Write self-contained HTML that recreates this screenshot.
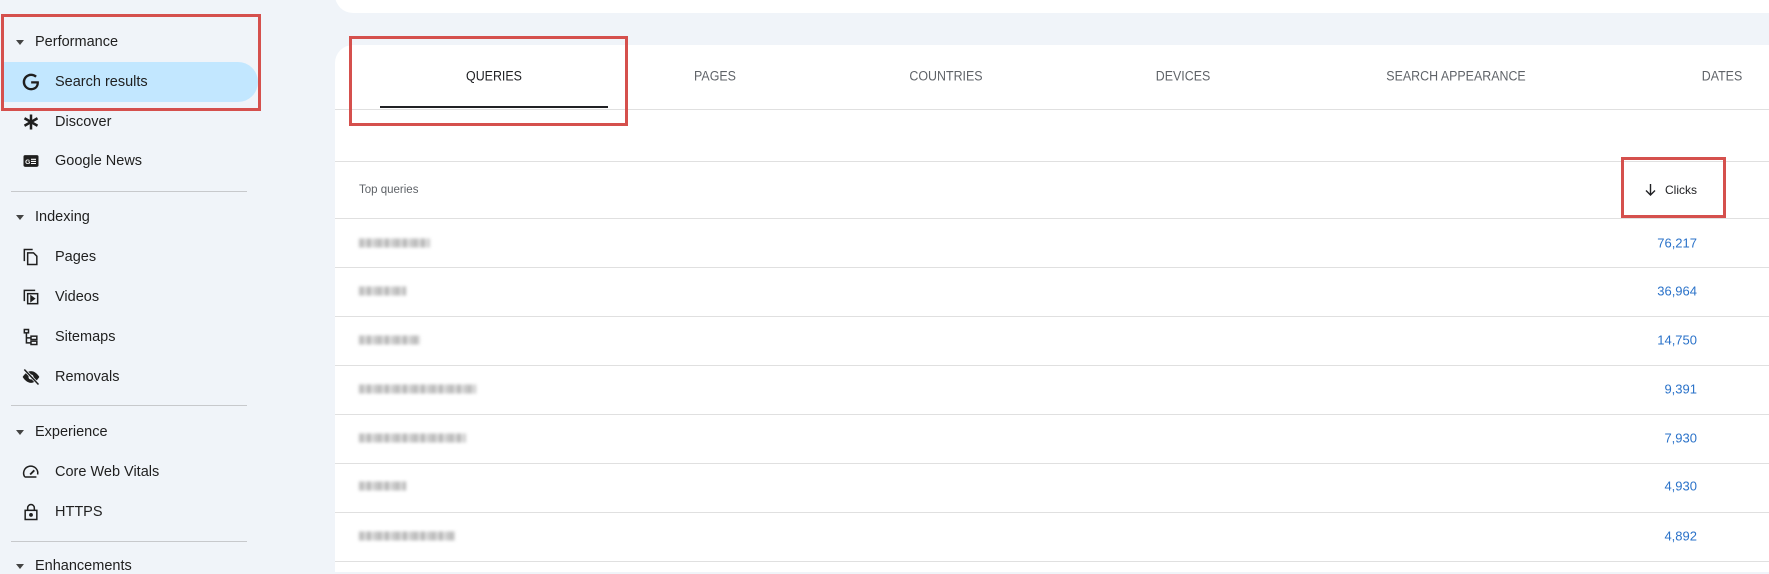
<!DOCTYPE html>
<html><head><meta charset="utf-8"><style>
*{box-sizing:border-box;margin:0;padding:0}
body{width:1769px;height:572px;overflow:hidden;background:#f0f4f9;font-family:"Liberation Sans",sans-serif;position:relative}
.a{position:absolute}
.nav{position:absolute;left:55px;font-size:14.5px;color:#1f1f1f;transform:translateY(-50%);white-space:nowrap}
.sec{position:absolute;left:35px;font-size:14.5px;color:#1f1f1f;transform:translateY(-50%)}
.tri{position:absolute;left:16px;width:0;height:0;border-left:4.5px solid transparent;border-right:4.5px solid transparent;border-top:5px solid #444;}
.ic{position:absolute;left:21px;width:20px;height:20px;transform:translateY(-50%)}
.div{position:absolute;left:11px;width:236px;height:1px;background:#c7c9cc}
.tab{position:absolute;top:76px;transform:translate(-50%,-50%) scaleX(0.92);font-size:13.5px;color:#5f6368;white-space:nowrap}
.hl{position:absolute;left:335px;right:0;height:1px;background:#e0e0e0}
.num{position:absolute;right:72px;font-size:13px;color:#2a72c9;transform:translateY(-50%)}
.blur{position:absolute;left:359px;height:9px;transform:translateY(-50%);filter:blur(1.6px);opacity:.75;background:repeating-linear-gradient(90deg,#a8a8a8 0 5px,#d4d4d4 5px 8px,#9c9c9c 8px 12px,#e2e2e2 12px 14px,#bcbcbc 14px 18px)}
.red{position:absolute;border:3.5px solid #d5504d}
</style></head><body>
<div class="a" style="left:335px;top:-20px;right:0;height:33px;background:#fff;border-radius:0 0 0 18px"></div>
<div class="a" style="left:335px;top:45px;right:0;bottom:0;background:#fff;border-radius:18px 0 0 0"></div>

<div class="a" style="left:4px;top:62px;width:254px;height:40px;background:#c2e7ff;border-radius:0 20px 20px 0"></div>
<div class="tri" style="top:40px"></div><div class="sec" style="top:42px">Performance</div>
<svg class="ic" style="top:82px" viewBox="0 0 24 24"><path d="M21.35 11.1h-9.17v2.73h6.51c-.33 3.81-3.5 5.44-6.5 5.44C8.360 19.27 5 16.25 5 12c0-4.1 3.2-7.270 7.2-7.27 3.09 0 4.9 1.97 4.9 1.97L19 4.72S16.56 2 12.1 2C6.42 2 2.03 6.8 2.03 12c0 5.05 4.13 10 10.22 10 5.35 0 9.25-3.67 9.25-9.09 0-1.15-.15-1.81-.15-1.81z" fill="#1f1f1f"/></svg>
<div class="nav" style="top:82px">Search results</div>
<svg class="ic" style="top:122px" viewBox="0 0 24 24"><path d="M12 3v18M4.2 7.5l15.6 9M4.2 16.5l15.6-9" stroke="#1f1f1f" stroke-width="3"/></svg>
<div class="nav" style="top:122px">Discover</div>
<svg class="ic" style="top:161px" viewBox="0 0 24 24"><rect x="3" y="5" width="18" height="14" rx="2" fill="#1f1f1f"/><text x="5" y="15.5" font-size="8" font-weight="bold" fill="#fff" font-family="Liberation Sans">G</text><path d="M12 10h6M12 12.5h6M12 15h6" stroke="#fff" stroke-width="1.3"/></svg>
<div class="nav" style="top:161px">Google News</div>
<div class="div" style="top:191px"></div>
<div class="tri" style="top:215px"></div><div class="sec" style="top:217px">Indexing</div>
<svg class="ic" style="top:257px" viewBox="0 0 24 24" fill="none" stroke="#1f1f1f" stroke-width="1.8"><path d="M4 17V3h10"/><path d="M8 7h7l4 4v10H8z"/></svg>
<div class="nav" style="top:257px">Pages</div>
<svg class="ic" style="top:297px" viewBox="0 0 24 24" fill="none" stroke="#1f1f1f" stroke-width="1.8"><path d="M4 17V4h13"/><rect x="8" y="8" width="12" height="12"/><path d="M12 11v6l4-3z" fill="#1f1f1f"/></svg>
<div class="nav" style="top:297px">Videos</div>
<svg class="ic" style="top:337px" viewBox="0 0 24 24" fill="none" stroke="#1f1f1f" stroke-width="1.8"><rect x="4" y="3" width="5" height="4"/><rect x="12" y="11" width="7" height="4"/><rect x="12" y="17" width="7" height="4"/><path d="M6.5 7v12H12M6.5 13H12"/></svg>
<div class="nav" style="top:337px">Sitemaps</div>
<svg class="ic" style="top:377px" viewBox="0 0 24 24"><path d="M2 12s4-7 10-7 10 7 10 7-4 7-10 7S2 12 2 12z" fill="#1f1f1f"/><circle cx="12" cy="12" r="3" fill="#f0f4f9"/><path d="M4 3l17 18" stroke="#f0f4f9" stroke-width="3.5"/><path d="M4 3l17 18" stroke="#1f1f1f" stroke-width="1.8"/></svg>
<div class="nav" style="top:377px">Removals</div>
<div class="div" style="top:405px"></div>
<div class="tri" style="top:430px"></div><div class="sec" style="top:432px">Experience</div>
<svg class="ic" style="top:472px" viewBox="0 0 24 24" fill="none" stroke="#1f1f1f" stroke-width="1.8"><path d="M4.5 18A8.5 8.5 0 1 1 20 15M4.5 18h14"/><path d="M11 15l5-5" stroke-width="2.2"/></svg>
<div class="nav" style="top:472px">Core Web Vitals</div>
<svg class="ic" style="top:512px" viewBox="0 0 24 24" fill="none" stroke="#1f1f1f" stroke-width="1.8"><rect x="5" y="10" width="14" height="11"/><path d="M8 10V7a4 4 0 0 1 8 0v3"/><circle cx="12" cy="15.5" r="1.4" fill="#1f1f1f"/></svg>
<div class="nav" style="top:512px">HTTPS</div>
<div class="div" style="top:541px"></div>
<div class="tri" style="top:564px"></div><div class="sec" style="top:566px">Enhancements</div>

<div class="tab" style="left:494px;color:#202124">QUERIES</div>
<div class="tab" style="left:715px">PAGES</div>
<div class="tab" style="left:946px">COUNTRIES</div>
<div class="tab" style="left:1183px">DEVICES</div>
<div class="tab" style="left:1456px">SEARCH APPEARANCE</div>
<div class="tab" style="left:1722px">DATES</div>
<div class="a" style="left:380px;top:106px;width:228px;height:2px;background:#202124"></div>
<div class="hl" style="top:109px"></div>
<div class="hl" style="top:161px"></div>
<div class="a" style="left:359px;top:190px;transform:translateY(-50%);font-size:11.5px;color:#5f6368">Top queries</div>
<svg class="a" style="left:1644px;top:183px" width="13" height="14" viewBox="0 0 13 14"><path d="M6.5 1v11M2 7.5l4.5 4.5 4.5-4.5" stroke="#202124" stroke-width="1.4" fill="none"/></svg>
<div class="a" style="left:1665px;top:190px;transform:translateY(-50%);font-size:12px;color:#202124">Clicks</div>
<div class="hl" style="top:218px"></div>
<div class="hl" style="top:267px"></div>
<div class="hl" style="top:316px"></div>
<div class="hl" style="top:365px"></div>
<div class="hl" style="top:414px"></div>
<div class="hl" style="top:463px"></div>
<div class="hl" style="top:512px"></div>
<div class="hl" style="top:561px"></div>

<div class="blur" style="top:243px;width:71px"></div>
<div class="blur" style="top:291px;width:47px"></div>
<div class="blur" style="top:340px;width:61px"></div>
<div class="blur" style="top:389px;width:117px"></div>
<div class="blur" style="top:438px;width:107px"></div>
<div class="blur" style="top:486px;width:47px"></div>
<div class="blur" style="top:536px;width:96px"></div>

<div class="num" style="top:243px">76,217</div>
<div class="num" style="top:291px">36,964</div>
<div class="num" style="top:340px">14,750</div>
<div class="num" style="top:389px">9,391</div>
<div class="num" style="top:438px">7,930</div>
<div class="num" style="top:486px">4,930</div>
<div class="num" style="top:536px">4,892</div>

<div class="red" style="left:1px;top:14px;width:260px;height:97px"></div>
<div class="red" style="left:349px;top:36px;width:279px;height:90px"></div>
<div class="red" style="left:1621px;top:157px;width:105px;height:61px"></div>
</body></html>
